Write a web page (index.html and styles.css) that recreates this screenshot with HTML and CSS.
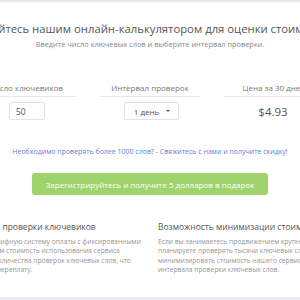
FILE: index.html
```html
<!DOCTYPE html>
<html lang="ru">

<head>
  <meta charset="UTF-8">
  <meta name="viewport" content="width=device-width, initial-scale=1.0">
  <title>Калькулятор стоимости</title>
  <link rel="stylesheet" href="styles.css">
</head>

<body>
  <div class="band"></div>
  <div class="page">
    <h1 class="calc__title">Воспользуйтесь нашим онлайн-калькулятором для оценки стоимости услуг</h1>
    <div class="calc__subtitle">Введите число ключевых слов и выберите интервал проверки.</div>

    <div class="calc__row">
      <div class="calc__col">
        <div class="calc__label">Число ключевиков</div>
        <div class="calc__field">
          <input class="calc__input" type="text" value="50">
        </div>
      </div>
      <div class="calc__col">
        <div class="calc__label">Интервал проверок</div>
        <div class="calc__field">
          <button class="calc__select">1 день <span class="caret"></span></button>
        </div>
      </div>
      <div class="calc__col">
        <div class="calc__label">Цена за 30 дней</div>
        <div class="calc__field">
          <div class="calc__price">$4.93</div>
        </div>
      </div>
    </div>

    <a class="calc__link" href="#">Необходимо проверять более 1000 слов? - Свяжитесь с нами и получите скидку!</a>

    <div class="calc__action">
      <button class="calc__btn">Зарегистрируйтесь и получите 5 долларов в подарок</button>
    </div>

    <div class="features">
      <div class="features__item features__item--left">
        <h3>Гибкая система проверки ключевиков</h3>
        <p>Мы предлагаем тарифную систему оплаты с фиксированными<br>
          Также рассчитываем стоимость использования сервиса<br>
          в зависимости от количества проверок ключевых слов, что<br>
          исключает любую переплату.</p>
      </div>
      <div class="features__item">
        <h3>Возможность минимизации стоимости</h3>
        <p>Если вы занимаетесь продвижением крупных проектов и<br>
          планируете проверять тысячи ключевых слов, вы можете<br>
          минимизировать стоимость нашего сервиса за счёт увеличения<br>
          интервала проверки ключевых слов.</p>
      </div>
    </div>
  </div>
  <div class="band band--bottom"></div>
</body>

</html>
```

FILE: styles.css
```css
/*Обнуление*/
* {
  padding: 0;
  margin: 0;
  border: 0;
}

*,
*:before,
*:after {
  box-sizing: border-box;
}

:focus,
:active {
  outline: none;
}

input,
button {
  font-family: inherit;
}

button {
  cursor: pointer;
}

a,
a:visited {
  text-decoration: none;
}

h1,
h3 {
  font-size: inherit;
  font-weight: 400;
}

/*--------------------*/
html,
body {
  height: 300px;
  overflow: hidden;
}

body {
  display: flex;
  flex-direction: column;
  align-items: center;
  background: #fff;
  font-family: 'Open Sans', sans-serif;
  color: #555;
}

.band {
  align-self: stretch;
  height: 2px;
  background: #ebeaf3;
  flex: none;
}

.band--bottom {
  height: 3px;
  margin-top: auto;
}

.page {
  flex: none;
  width: 520px;
  display: flex;
  flex-direction: column;
  align-items: center;
}

.calc__title {
  margin-top: 19px;
  font-size: 11.3px;
  line-height: 16px;
  white-space: nowrap;
  color: #555;
}

.calc__subtitle {
  margin-top: 2px;
  font-size: 7.4px;
  line-height: 10px;
  color: #888;
}

.calc__row {
  display: flex;
  justify-content: center;
  gap: 24px;
  margin-top: 33px;
}

.calc__col {
  width: 100px;
  text-align: center;
}

.calc__label {
  font-size: 8px;
  line-height: 12px;
  padding-bottom: 2px;
  border-bottom: 1px solid #e8e8ec;
  color: #777;
  white-space: nowrap;
}

.calc__field {
  margin-top: 5px;
  height: 18px;
  display: flex;
  justify-content: center;
  align-items: center;
}

.calc__input {
  width: 36px;
  height: 18px;
  padding: 0 6px;
  border: 1px solid #e2e2e6;
  border-radius: 2px;
  font-size: 8.5px;
  color: #555;
  margin-left: 2px;
}

.calc__select {
  display: flex;
  align-items: center;
  gap: 7px;
  height: 18px;
  padding: 0 8px 0 9px;
  margin-left: 3px;
  border: 1px solid #e2e2e6;
  border-radius: 2px;
  background: #fff;
  font-size: 8px;
  color: #555;
}

.caret {
  width: 0;
  height: 0;
  border-left: 2px solid transparent;
  border-right: 2px solid transparent;
  border-top: 2px solid #555;
}

.calc__price {
  font-size: 11.5px;
  color: #555;
  margin-left: -2px;
}

.calc__link {
  margin-top: 27px;
  font-size: 7px;
  line-height: 10px;
  color: #5b7fd8;
}

.calc__action {
  display: flex;
  margin-top: 16px;
}

.calc__btn {
  width: 236px;
  height: 22px;
  padding: 0;
  border-radius: 3px;
  background: #9fd46c;
  color: #fff;
  font-size: 8px;
  white-space: nowrap;
}

.features {
  display: flex;
  align-self: stretch;
  gap: 16px;
  margin-top: 26px;
  padding-left: 46px;
}

.features__item {
  width: 200px;
  flex: none;
}

.features__item--left {
  width: 206px;
}

.features__item h3 {
  font-size: 8.5px;
  line-height: 12px;
  color: #555;
  white-space: nowrap;
}

.features__item p {
  margin-top: 4px;
  font-size: 6.7px;
  line-height: 9.3px;
  color: #959595;
  white-space: nowrap;
}
```
